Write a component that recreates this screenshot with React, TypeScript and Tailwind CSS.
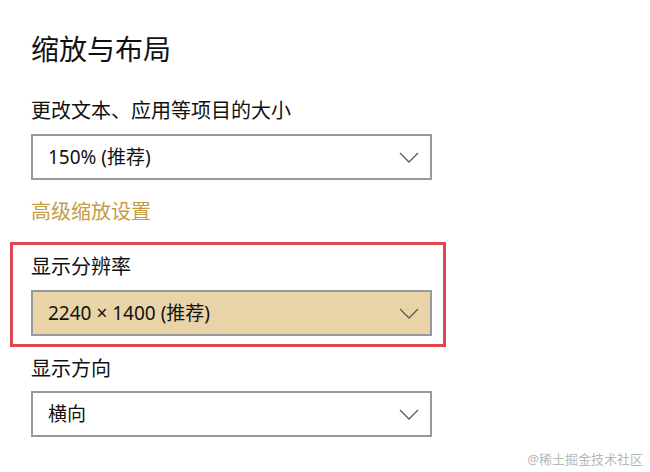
import React from "react";

const Chevron = () => (
  <svg width="20" height="11" viewBox="0 0 20 11" className="shrink-0">
    <polyline points="1,1 10,10 19,1" fill="none" stroke="#5a5a5a" strokeWidth="1.3" />
  </svg>
);

const Select = ({ text, active }: { text: string; active?: boolean }) => (
  <div
    className={`w-[401px] h-[46px] border-2 border-[#999999] flex items-center justify-between pl-[15px] pr-[11px] ${
      active ? "bg-[#e9d4a8]" : "bg-white"
    }`}
  >
    <span className="text-[19px] leading-[20px] text-[#111]">{text}</span>
    <Chevron />
  </div>
);

export default function App() {
  return (
    <div
      className="relative w-[650px] h-[472px] bg-white overflow-hidden text-[#111]"
      style={{ fontFamily: '"Noto Sans", "Noto Sans CJK SC", sans-serif' }}
    >
      <div className="flex flex-col pl-[31px] pt-[35px]">
        <div className="text-[28px] leading-[28px]">缩放与布局</div>
        <div className="mt-[38px] text-[20px] leading-[20px]">更改文本、应用等项目的大小</div>
        <div className="mt-[13px]">
          <Select text="150% (推荐)" />
        </div>
        <div className="mt-[22px] text-[20px] leading-[20px] text-[#c49c45]">高级缩放设置</div>
        <div className="mt-[20px] -ml-[21px] w-[436px] border-[3px] border-[#e0464e] pl-[18px] pt-[12px] pb-[8px]">
          <div className="text-[20px] leading-[20px]">显示分辨率</div>
          <div className="mt-[13px]">
            <Select text="2240 × 1400 (推荐)" active />
          </div>
        </div>
        <div className="mt-[12px] text-[20px] leading-[20px]">显示方向</div>
        <div className="mt-[12px]">
          <Select text="横向" />
        </div>
      </div>
      <div className="absolute right-[7px] top-[450px] text-[13px] leading-[18px] text-[#b8b8b8]">
        @稀土掘金技术社区
      </div>
    </div>
  );
}
